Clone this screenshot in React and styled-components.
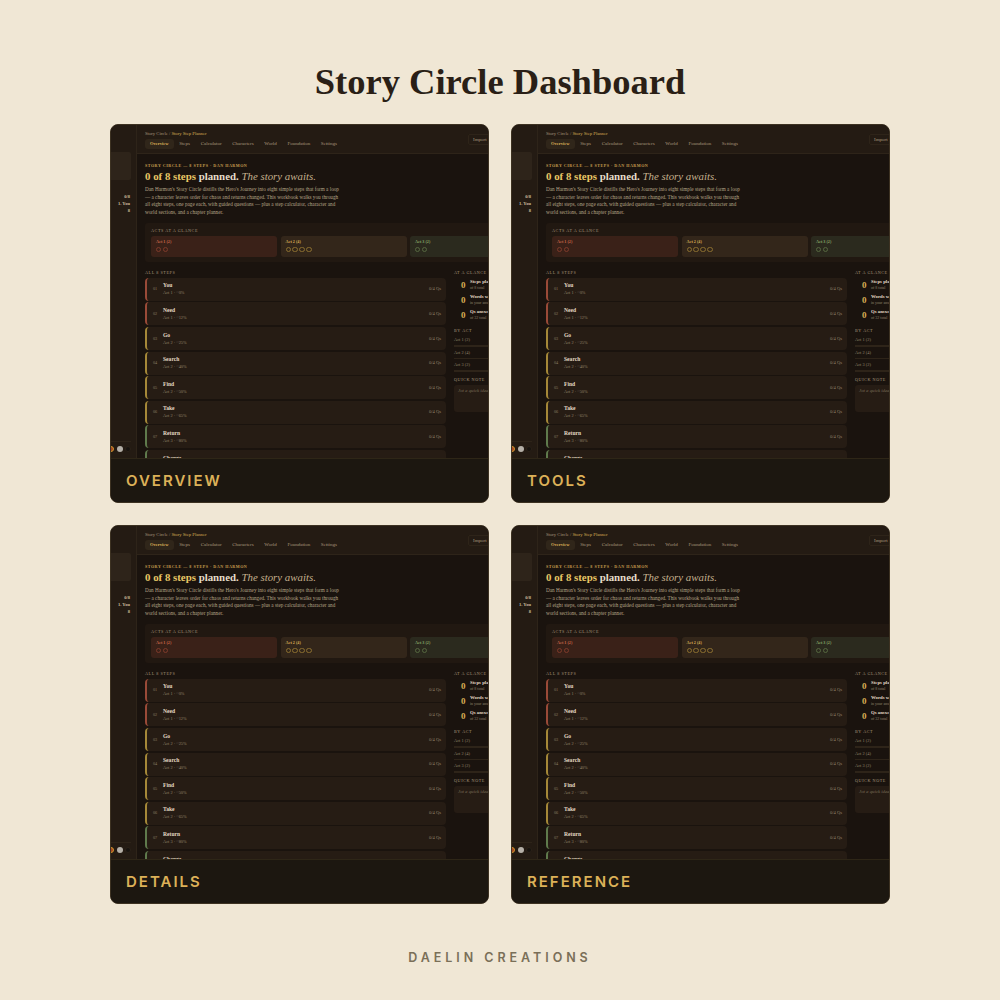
import React from "react";
import styled, { createGlobalStyle } from "styled-components";

const Global = createGlobalStyle`
  html, body { margin: 0; padding: 0; background: #f0e7d5; }
  * { box-sizing: border-box; }
`;

const SERIF = `"Liberation Serif", serif`;

const Page = styled.div`
  width: 1000px;
  height: 1000px;
  background: #f0e7d5;
  display: flex;
  flex-direction: column;
  align-items: center;
  overflow: hidden;
`;
const Title = styled.h1`
  margin: 60px 0 0;
  height: 64px;
  font: 700 36.5px/44px ${SERIF};
  color: #2a1f16;
`;
const Grid = styled.div`
  display: grid;
  grid-template-columns: 379px 379px;
  grid-auto-rows: 379px;
  column-gap: 22px;
  row-gap: 22px;
`;
const Card = styled.section`
  border-radius: 8px;
  overflow: hidden;
  border: 1px solid #3d3222;
  display: flex;
  flex-direction: column;
  background: #1a130e;
`;
const Windowed = styled.div`
  flex: 1;
  min-height: 0;
  display: flex;
  overflow: hidden;
`;
const Caption = styled.div`
  height: 44px;
  flex: none;
  background: #1c1710;
  border-top: 1px solid #2e2617;
  padding-left: 15px;
  display: flex;
  align-items: center;
  font: 600 15px "Inter", sans-serif;
  letter-spacing: 2px;
  color: #dcb158;
`;
const Sidebar = styled.aside`
  width: 26px;
  flex: none;
  background: #241b13;
  border-right: 1px solid #2e2419;
  display: flex;
  flex-direction: column;
  align-items: flex-end;
  padding-top: 27px;
  overflow: hidden;
`;
const SideBox = styled.div`
  width: 21px;
  height: 28px;
  margin-right: 5px;
  background: #2e241a;
  border-radius: 0 2px 2px 0;
  margin-bottom: 13px;
  flex: none;
`;
const SideStat = styled.div`
  font: 700 4.6px/7.2px ${SERIF};
  color: #cdbb9c;
  margin-right: 6px;
  text-align: right;
`;
const SideDots = styled.div`
  margin-top: auto;
  margin-bottom: 2px;
  width: 23px;
  margin-right: 5px;
  height: 15px;
  flex: none;
  border-top: 1px solid #2e2419;
  display: flex;
  align-items: center;
  gap: 2.5px;
`;
const Dot = styled.span`
  width: 6px;
  height: 6px;
  border-radius: 50%;
  flex: none;
  background: ${(p) => p.$c};
  border: ${(p) => (p.$b ? `1px solid ${p.$b}` : "none")};
`;
const Main = styled.div`
  flex: 1;
  min-width: 0;
  display: flex;
  flex-direction: column;
  overflow: hidden;
`;
const Topbar = styled.header`
  height: 29px;
  flex: none;
  background: #241b13;
  border-bottom: 1px solid #2e2419;
  position: relative;
  padding: 6px 0 0 8px;
`;
const Crumb = styled.div`
  font: 400 4.7px/6px ${SERIF};
  color: #a8977c;
  span { color: #d9ae55; }
`;
const Tabs = styled.nav`
  display: flex;
  gap: 0.7px;
  margin-top: 2px;
`;
const Tab = styled.div`
  height: 10px;
  padding: 0 5px;
  border-radius: 3px;
  font: ${(p) => (p.$on ? "700 4.5px" : "400 5px")}/10px ${SERIF};
  color: ${(p) => (p.$on ? "#d9ae55" : "#a8977c")};
  background: ${(p) => (p.$on ? "#30261a" : "transparent")};
`;
const ImportBtn = styled.div`
  position: absolute;
  left: 331px;
  top: 9px;
  width: 30px;
  height: 11px;
  border: 1px solid #2e2419;
  border-radius: 2px;
  padding-left: 4px;
  font: 400 5px/9px ${SERIF};
  color: #a8977c;
`;
const Content = styled.div`
  flex: 1;
  min-height: 0;
  width: 420px;
  padding: 9px 0 0 8px;
`;
const Eyebrow = styled.div`
  font: 700 4.1px/5px ${SERIF};
  letter-spacing: 0.5px;
  color: #c69f4e;
  text-transform: uppercase;
`;
const Headline = styled.h2`
  margin: 1.5px 0 0;
  font: 400 10.85px/13px ${SERIF};
  color: #e6dcc8;
  strong { color: #e8c766; font-weight: 700; }
  b { font-weight: 700; }
  em { color: #c4b08d; }
`;
const Lede = styled.p`
  margin: 3.5px 0 0;
  width: 196px;
  font: 400 5.2px/7.6px ${SERIF};
  color: #b7a688;
`;
const ActsPanel = styled.div`
  margin-top: 7px;
  width: 400px;
  height: 39px;
  background: #211811;
  border-radius: 3px;
  padding: 5px 6px;
`;
const SectionLabel = styled.div`
  font: 400 4.2px/6px ${SERIF};
  letter-spacing: 0.55px;
  color: #a8977c;
  text-transform: uppercase;
`;
const ActRow = styled.div`
  display: flex;
  gap: 3.5px;
  margin-top: 2px;
`;
const ActCard = styled.div`
  width: 126px;
  height: 21px;
  flex: none;
  border-radius: 3px;
  padding: 3px 5px 0;
  background: ${(p) => p.$bg};
  font: 700 4.2px/6px ${SERIF};
  color: ${(p) => p.$c};
`;
const Rings = styled.div`
  display: flex;
  gap: 1.6px;
  margin-top: 1.2px;
`;
const Ring = styled.span`
  width: 5.4px;
  height: 5.4px;
  border-radius: 50%;
  border: 0.6px solid ${(p) => p.$c};
`;
const Columns = styled.div`
  display: flex;
  gap: 8px;
  margin-top: 8px;
`;
const StepsCol = styled.div`
  width: 301px;
  flex: none;
`;
const StepRow = styled.div`
  height: 23px;
  margin-top: ${(p) => (p.$first ? "1.5px" : "1.6px")};
  background: #261c14;
  border-left: 2px solid ${(p) => p.$c};
  border-radius: 4px;
  display: flex;
  align-items: center;
  padding: 0 5px 0 6px;
`;
const StepNum = styled.div`
  width: 10px;
  flex: none;
  font: 400 4.2px/6px ${SERIF};
  color: #8d7d65;
`;
const StepText = styled.div`
  flex: 1;
`;
const StepName = styled.div`
  font: 700 5.6px/7px ${SERIF};
  color: #e3d8c4;
`;
const StepSub = styled.div`
  margin-top: 1px;
  font: 400 4.4px/6px ${SERIF};
  color: #93836b;
`;
const StepCount = styled.div`
  font: 400 4.6px/6px ${SERIF};
  color: #93836b;
`;
const RightCol = styled.div`
  width: 90px;
  flex: none;
`;
const Stat = styled.div`
  display: flex;
  align-items: center;
  height: 15px;
  padding-left: 7px;
  margin-top: ${(p) => (p.$first ? "1px" : "0")};
`;
const StatNum = styled.div`
  width: 9px;
  flex: none;
  font: 700 9px/12px ${SERIF};
  color: #d9ae55;
`;
const StatLabel = styled.div`
  font: 700 4.8px/6px ${SERIF};
  color: #e3d8c4;
  white-space: nowrap;
  small {
    display: block;
    font: 400 4px/5.5px ${SERIF};
    color: #93836b;
  }
`;
const LabelGap = styled(SectionLabel)`
  margin-top: ${(p) => p.$top}px;
`;
const ByAct = styled.div`
  margin-top: 3px;
  font: 400 4.4px/6px ${SERIF};
  color: #93836b;
`;
const ByBar = styled.div`
  height: 1.5px;
  margin: 2px 0 1.5px;
  background: #2e2419;
`;
const Note = styled.div`
  margin-top: 2px;
  height: 27px;
  background: #261c14;
  border-radius: 3px;
  padding: 3px 4px;
  font: italic 400 4.8px/6px ${SERIF};
  color: #7d6e58;
`;
const Footer = styled.footer`
  margin-top: 46px;
  font: 600 12.5px/16px "Inter", sans-serif;
  letter-spacing: 3.95px;
  color: #7a6f58;
`;

const RED = "#9a4a38";
const GOLD = "#a58838";
const GREEN = "#5f7a4c";
const steps = [
  ["01", "You", "Act 1 · ~0%", RED],
  ["02", "Need", "Act 1 · ~12%", RED],
  ["03", "Go", "Act 2 · ~25%", GOLD],
  ["04", "Search", "Act 2 · ~40%", GOLD],
  ["05", "Find", "Act 2 · ~50%", GOLD],
  ["06", "Take", "Act 2 · ~65%", GOLD],
  ["07", "Return", "Act 3 · ~80%", GREEN],
  ["08", "Change", "Act 3 · ~95%", GREEN],
];
const acts = [
  { label: "Act 1 (2)", n: 2, bg: "#3a2118", c: "#c8674a", r: "#7d3a2a" },
  { label: "Act 2 (4)", n: 4, bg: "#33261a", c: "#d9ae55", r: "#8a6e30" },
  { label: "Act 3 (2)", n: 2, bg: "#2b2a1e", c: "#8aa868", r: "#55663f" },
];
const tabs = ["Overview", "Steps", "Calculator", "Characters", "World", "Foundation", "Settings"];

function Dashboard({ label }) {
  return (
    <Card>
      <Windowed>
        <Sidebar>
          <SideBox />
          <SideStat>0/8</SideStat>
          <SideStat>1. You</SideStat>
          <SideStat>8</SideStat>
          <SideDots>
            <Dot $c="#a8451f" $b="#c8962e" />
            <Dot $c="#b5b0a8" />
            <Dot $c="#17130f" $b="#2a2118" />
          </SideDots>
        </Sidebar>
        <Main>
          <Topbar>
            <Crumb>
              Story Circle / <span>Story Step Planner</span>
            </Crumb>
            <Tabs>
              {tabs.map((t, i) => (
                <Tab key={t} $on={i === 0}>
                  {t}
                </Tab>
              ))}
            </Tabs>
            <ImportBtn>Import</ImportBtn>
          </Topbar>
          <Content>
            <Eyebrow>Story Circle — 8 Steps · Dan Harmon</Eyebrow>
            <Headline>
              <strong>0 of 8 steps</strong> <b>planned.</b> <em>The story awaits.</em>
            </Headline>
            <Lede>
              Dan Harmon's Story Circle distills the Hero's Journey into eight simple steps that form a loop — a
              character leaves order for chaos and returns changed. This workbook walks you through all eight steps,
              one page each, with guided questions — plus a step calculator, character and world sections, and a
              chapter planner.
            </Lede>
            <ActsPanel>
              <SectionLabel>Acts at a glance</SectionLabel>
              <ActRow>
                {acts.map((a) => (
                  <ActCard key={a.label} $bg={a.bg} $c={a.c}>
                    {a.label}
                    <Rings>
                      {Array.from({ length: a.n }).map((_, i) => (
                        <Ring key={i} $c={a.r} />
                      ))}
                    </Rings>
                  </ActCard>
                ))}
              </ActRow>
            </ActsPanel>
            <Columns>
              <StepsCol>
                <SectionLabel>All 8 steps</SectionLabel>
                {steps.map(([n, name, sub, c], i) => (
                  <StepRow key={n} $c={c} $first={i === 0}>
                    <StepNum>{n}</StepNum>
                    <StepText>
                      <StepName>{name}</StepName>
                      <StepSub>{sub}</StepSub>
                    </StepText>
                    <StepCount>0/4 Qs</StepCount>
                  </StepRow>
                ))}
              </StepsCol>
              <RightCol>
                <SectionLabel>At a glance</SectionLabel>
                <Stat $first>
                  <StatNum>0</StatNum>
                  <StatLabel>
                    Steps planned<small>of 8 total</small>
                  </StatLabel>
                </Stat>
                <Stat>
                  <StatNum>0</StatNum>
                  <StatLabel>
                    Words written<small>in your answers</small>
                  </StatLabel>
                </Stat>
                <Stat>
                  <StatNum>0</StatNum>
                  <StatLabel>
                    Qs answered<small>of 32 total</small>
                  </StatLabel>
                </Stat>
                <LabelGap $top={6}>By act</LabelGap>
                <ByAct>Act 1 (2)</ByAct>
                <ByBar />
                <ByAct>Act 2 (4)</ByAct>
                <ByBar />
                <ByAct>Act 3 (2)</ByAct>
                <ByBar />
                <LabelGap $top={5.5}>Quick note</LabelGap>
                <Note>Jot a quick idea...</Note>
              </RightCol>
            </Columns>
          </Content>
        </Main>
      </Windowed>
      <Caption>{label}</Caption>
    </Card>
  );
}

export default function App() {
  return (
    <Page>
      <Global />
      <Title>Story Circle Dashboard</Title>
      <Grid>
        {["OVERVIEW", "TOOLS", "DETAILS", "REFERENCE"].map((l) => (
          <Dashboard key={l} label={l} />
        ))}
      </Grid>
      <Footer>DAELIN CREATIONS</Footer>
    </Page>
  );
}
